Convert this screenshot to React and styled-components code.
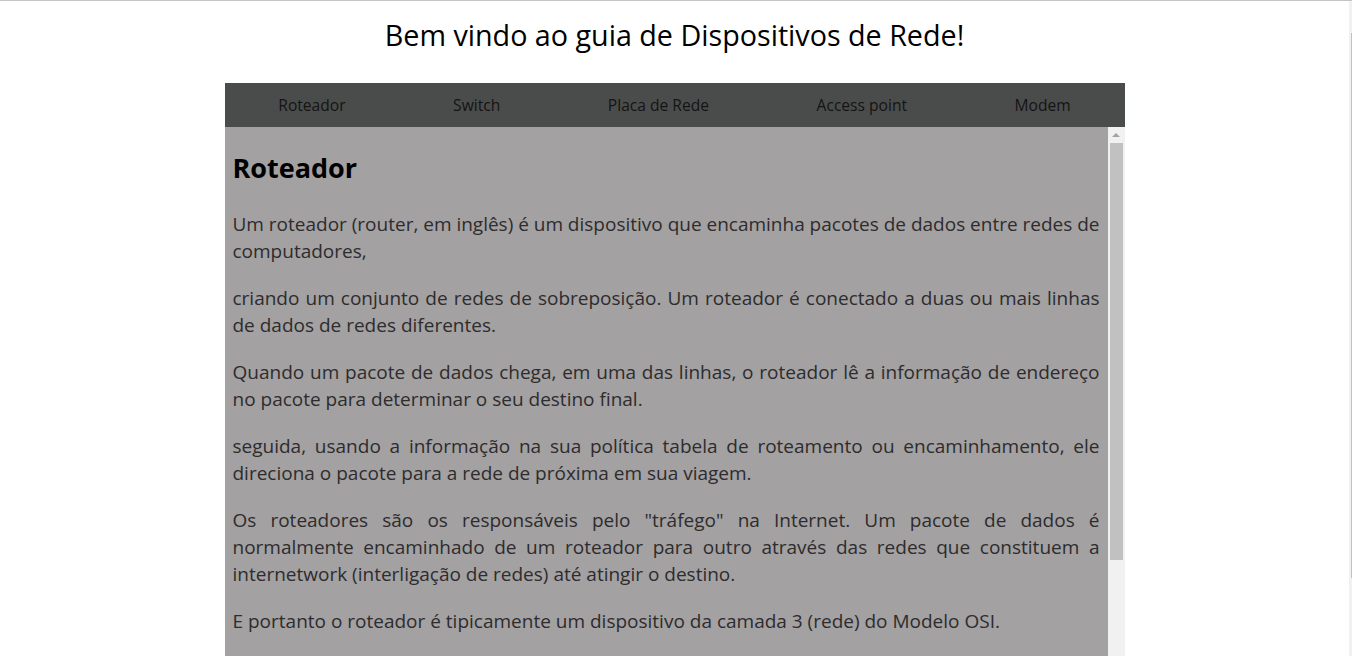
import React from "react";
import styled, { createGlobalStyle } from "styled-components";

const GlobalStyle = createGlobalStyle`
  body {
    margin: 0;
    border-top: 1px solid #c4c4c4;
    background: #fff;
    font-family: "Open Sans", "Noto Sans", sans-serif;
    overflow: hidden;
  }
`;

const Shell = styled.div`
  display: flex;
  height: 655px;
`;

const Page = styled.div`
  flex: 1;
  min-width: 0;
`;

const PageScroll = styled.div`
  width: 3px;
  display: flex;
  flex-direction: column;
  background: #f1f1f1;
  padding-top: 32px;
  box-sizing: border-box;
`;

const PageThumb = styled.div`
  height: 545px;
  margin-left: 2px;
  background: #c1c1c1;
`;

const Title = styled.h1`
  margin: 13px 0 27px;
  text-align: center;
  font-size: 28.7px;
  font-weight: 400;
  line-height: 42px;
  color: #000;
`;

const Main = styled.main`
  width: 900px;
  margin: 0 auto;
`;

const Nav = styled.nav`
  display: flex;
  justify-content: space-around;
  align-items: center;
  height: 44px;
  background: #4a4c4b;
`;

const NavLink = styled.a`
  font-size: 15.6px;
  color: #151313;
  text-decoration: none;
  cursor: pointer;
`;

const Content = styled.section`
  display: flex;
  height: 583px;
  background: #a3a1a2;
`;

const Article = styled.article`
  flex: 1;
  min-width: 0;
  padding: 0 8px;
  overflow: hidden;
`;

const ScrollBar = styled.div`
  width: 17px;
  flex-shrink: 0;
  display: flex;
  flex-direction: column;
  background: #f1f1f1;
`;

const ScrollButton = styled.div`
  height: 16px;
  display: flex;
  align-items: center;
  justify-content: center;

  &::before {
    content: "";
    width: 0;
    height: 0;
    border-left: 4px solid transparent;
    border-right: 4px solid transparent;
    border-bottom: 4px solid #a3a3a3;
  }
`;

const ScrollThumb = styled.div`
  height: 417px;
  margin: 0 2px;
  background: #c1c1c1;
`;

const Heading = styled.h2`
  margin: 20px 0 22px;
  font-size: 27px;
  font-weight: 700;
  line-height: 42px;
  color: #000;
`;

const Paragraph = styled.p`
  margin: 0 0 20px;
  font-size: 19px;
  word-spacing: ${(props) => (props.$tight ? "-0.6px" : "0")};
  line-height: 27px;
  text-align: justify;
  color: #2e2c2d;
`;

const links = ["Roteador", "Switch", "Placa de Rede", "Access point", "Modem"];

const paragraphs = [
  "Um roteador (router, em inglês) é um dispositivo que encaminha pacotes de dados entre redes de computadores,",
  "criando um conjunto de redes de sobreposição. Um roteador é conectado a duas ou mais linhas de dados de redes diferentes.",
  "Quando um pacote de dados chega, em uma das linhas, o roteador lê a informação de endereço no pacote para determinar o seu destino final.",
  "seguida, usando a informação na sua política tabela de roteamento ou encaminhamento, ele direciona o pacote para a rede de próxima em sua viagem.",
  "Os roteadores são os responsáveis pelo \"tráfego\" na Internet. Um pacote de dados é normalmente encaminhado de um roteador para outro através das redes que constituem a internetwork (interligação de redes) até atingir o destino.",
  "E portanto o roteador é tipicamente um dispositivo da camada 3 (rede) do Modelo OSI.",
];

const App = () => {
  return (
    <Shell>
      <GlobalStyle />
      <Page>
        <Title>Bem vindo ao guia de Dispositivos de Rede!</Title>
        <Main>
          <Nav>
            {links.map((link) => (
              <NavLink key={link}>{link}</NavLink>
            ))}
          </Nav>
          <Content>
            <Article>
              <Heading>Roteador</Heading>
              {paragraphs.map((text, i) => (
                <Paragraph key={i} $tight={i === 0}>
                  {text}
                </Paragraph>
              ))}
            </Article>
            <ScrollBar>
              <ScrollButton />
              <ScrollThumb />
            </ScrollBar>
          </Content>
        </Main>
      </Page>
      <PageScroll>
        <PageThumb />
      </PageScroll>
    </Shell>
  );
};

export default App;
